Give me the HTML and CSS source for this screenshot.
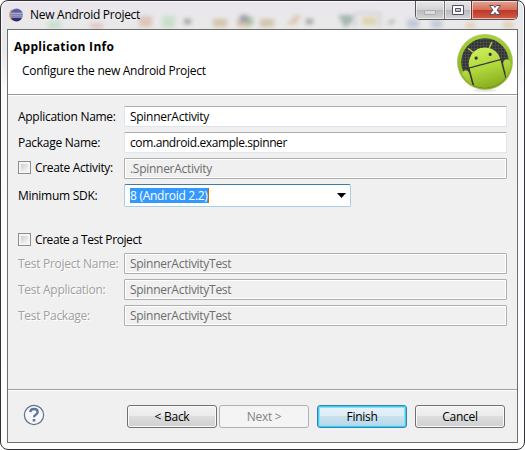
FILE: index.html
```html
<!DOCTYPE html>
<html lang="en">
<head>
<meta charset="utf-8">
<title>New Android Project</title>
<link rel="stylesheet" href="styles.css">
</head>
<body>
<div class="window">
  <header class="titlebar">
    <svg class="backdrop" width="523" height="28" aria-hidden="true">
      <defs><filter id="soft" x="-50%" y="-50%" width="200%" height="200%" color-interpolation-filters="sRGB"><feGaussianBlur stdDeviation="2.2"/></filter></defs>
      <g filter="url(#soft)">
        <path fill="#badabd" d="M47 20h13v8H47zM161 15h13v12h-13z"/>
        <path fill="#deb5b5" d="M89 22h13v6H89z"/>
        <path fill="#d4b49f" d="M138 15h13v11h-13z"/>
        <path fill="#c8b28b" d="M212 18h14v8h-14zM236 18h14v8h-14zM259 18h14v8h-14z"/>
        <path fill="#77738b" d="M239 14h8v7h-8z"/>
        <path fill="#85ad83" d="M247 16h5v8h-5z"/>
        <path fill="#d4b68a" d="m285 24 10-10h5l-5 9z"/>
        <path fill="#777" d="M183 18h7v5h-7zM305 18h7v5h-7zM385 23l8-5v4z"/>
        <path fill="#7f9d91" d="M337 14h15v6l-8 7z"/>
        <path fill="#d5ca92" d="M361 16h15v8h-15z"/>
        <path fill="#aeb9cd" d="M406 18h12v9h-12zM430 19h11v8h-11z"/>
        <path fill="#e2c69e" d="M465 21h9v7h-9zM502 20h10v8h-10z"/>
      </g>
      <g fill="none" stroke="#9b9b9b" filter="url(#soft)"><path d="M354 27V12h25v15"/></g>
    </svg>
    <svg class="app-icon" width="16" height="16" viewBox="0 0 16 16">
      <defs><linearGradient id="orb" x2="0" y2="1"><stop stop-color="#6a69b3"/><stop offset="1" stop-color="#292060"/></linearGradient></defs>
      <path d="M5 1.7C-.4 3.5-.5 12 5 14.3 2.4 11 2.4 5 5 1.7Z" fill="#e5a65d"/>
      <circle cx="8.5" cy="8" r="6.4" fill="url(#orb)"/>
      <path d="M2.1 6.2h12.8M1.8 8.1H15M2.1 10h12.8" stroke="#dbe2f2" stroke-width=".9"/>
    </svg>
    <h1 class="title">New Android Project</h1>
    <div class="controls">
      <span class="control minimize"><svg width="28" height="19"><rect x="8.5" y="9.5" width="11" height="4" rx=".5" fill="#ddd" stroke="#aaa"/></svg></span>
      <span class="control maximize"><svg width="26" height="19"><path fill="#fff" stroke="#515166" fill-rule="evenodd" d="M7.5 4.5h11v9h-11zm3 3v3h5v-3z"/></svg></span>
      <span class="control close"><svg width="47" height="19"><path d="M18.5 4.5h4l1.500 2 1.500-2h4L26 9l3.500 4.500h-4l-1.500-2-1.500 2h-4L22 9z" fill="#fff" stroke="#515166"/></svg></span>
    </div>
  </header>
  <main class="client">
    <section class="banner">
      <div class="heading">
        <h2>Application Info</h2>
        <p>Configure the new Android Project</p>
      </div>
      <svg class="logo" width="58" height="60" viewBox="0 0 58 60">
        <defs>
          <linearGradient id="ring" x2="0" y2="1"><stop stop-color="#a6d338"/><stop offset="1" stop-color="#82a81b"/></linearGradient>
          <linearGradient id="robot" gradientUnits="userSpaceOnUse" x1="29" y1="12" x2="29" y2="58"><stop stop-color="#cdf15c"/><stop offset=".5" stop-color="#afd63a"/><stop offset="1" stop-color="#83a81a"/></linearGradient>
          <pattern id="mesh" width="3" height="3" patternUnits="userSpaceOnUse"><path fill="#343434" d="M0 0h3v3H0z"/><path d="M0 0h3M0 0v3" stroke="#585858"/></pattern>
          <clipPath id="disc"><circle cx="29" cy="29" r="26"/></clipPath>
        </defs>
        <ellipse cx="29" cy="57.500" rx="12" ry="1.500" fill="#e8e8e8"/>
        <circle cx="29" cy="29" r="27.600" fill="url(#ring)" stroke="#a4b969" stroke-width=".6"/>
        <circle cx="29" cy="29" r="23.800" fill="url(#mesh)"/>
        <g clip-path="url(#disc)">
          <g transform="rotate(-15 29 31)" fill="url(#robot)">
            <path fill="#343434" d="M11 31h35v20l-3 8H14l-3-7z"/>
            <path d="M13 30a16 15.500 0 0 1 32 0zM13 31.300h32v30H13zM4 37q0-5 3.700-5t3.700 5v23H4zM46.500 37q0-5 3.700-5t3.700 5v18h-7.400z"/>
            <path d="m21 17-4-5M37 17l4-5" stroke="#b2da47" stroke-width="1.400" stroke-linecap="round"/>
            <g fill="#333"><circle cx="22" cy="23" r="1.600"/><circle cx="36.500" cy="23" r="1.600"/></g>
          </g>
        </g>
      </svg>
    </section>
    <form class="settings">
      <div class="row"><label>Application Name:</label><div class="field"><span>SpinnerActivity</span></div></div>
      <div class="row"><label>Package Name:</label><div class="field"><span class="domain">com.android.example.spinner</span></div></div>
      <div class="row"><label class="check"><i></i><span>Create Activity:</span></label><div class="field disabled"><span>.SpinnerActivity</span></div></div>
      <div class="row sdk"><label>Minimum SDK:</label><div class="combo"><mark>8 (Android 2.2)</mark><svg width="9" height="5"><path d="M0 0h9L4.500 5z"/></svg></div></div>
      <label class="check test"><i></i><span>Create a Test Project</span></label>
      <div class="row off"><label>Test Project Name:</label><div class="field disabled"><span>SpinnerActivityTest</span></div></div>
      <div class="row off"><label>Test Application:</label><div class="field disabled"><span>SpinnerActivityTest</span></div></div>
      <div class="row off"><label>Test Package:</label><div class="field disabled"><span>SpinnerActivityTest</span></div></div>
    </form>
    <footer class="actions">
      <span class="help"><svg width="22" height="22" viewBox="0 0 22 22"><circle cx="11" cy="11" r="9.600" fill="#f7f8fa" stroke="#60708d" stroke-width="1.200"/><path d="M7.300 8.100Q7.400 5 11 5q3.700 0 3.700 3 0 1.500-2 2.700Q11 11.600 11 13.300" fill="none" stroke="#60749c" stroke-width="2.300"/><path fill="#60749c" d="M9.700 15h2.600v2.500H9.700z"/></svg></span>
      <button class="back">&lt; Back</button>
      <button class="next" disabled>Next &gt;</button>
      <button class="finish">Finish</button>
      <button class="cancel">Cancel</button>
    </footer>
  </main>
</div>
</body>
</html>
```
FILE: styles.css
```css
* { box-sizing: border-box; }
body {
  margin: 0;
  background: #fff;
  font: 12px/16px "Open Sans", "Noto Sans", sans-serif;
  letter-spacing: -0.28px;
  color: #000;
}
h1, h2, p { margin: 0; font-size: 12px; font-weight: 400; }
svg { display: block; }
.window {
  width: 525px;
  height: 450px;
  padding: 0 6px 6px;
  border: 1px solid #303035;
  border-radius: 8px;
  background: linear-gradient(#e9e6ed, #e9e9e9 28px, #e9e9e9 50px, #fafafa 90px, #fdfdfd);
  box-shadow: inset 0 0 0 1px #fbfbfb;
}
.titlebar {
  position: relative;
  display: flex;
  align-items: flex-start;
  height: 28px;
}
.backdrop { position: absolute; left: -6px; top: 0; opacity: .65; }
.app-icon { position: relative; margin: 6px 0 0 1px; }
.title { position: relative; margin: 6px 0 0 6px; letter-spacing: -.27px; }
.controls {
  position: relative;
  display: flex;
  width: 103px;
  height: 19px;
  margin: 0 0 0 auto;
  border: 1px solid #57535b;
  border-top: 0;
  border-radius: 0 0 5px 5px;
  overflow: hidden;
}
.control {
  width: 28px;
  background: linear-gradient(#e7e6e8, #d3d3d5 48%, #b9b9bc 50%, #d5d5d7);
  box-shadow: inset 0 0 0 1px #ffffff90;
}
.maximize { width: 27px; border-left: 1px solid #77747c; }
.close { width: 47px; border-left: 1px solid #65343c; background: linear-gradient(#e6a392, #d6705b 48%, #bd3625 50%, #d55d43); }
.close svg { margin-left: -1px; }
.client {
  width: 511px;
  height: 414px;
  border: 1px solid #6e6e6e;
  background: #f0f0f0;
}
.banner {
  display: flex;
  justify-content: space-between;
  height: 64px;
  padding: 0 3px 0 6px;
  background: #fff;
}
.heading h2 { margin-top: 9px; font-weight: 700; letter-spacing: .3px; }
.heading p { margin: 8px 0 0 8px; }
.logo { margin-top: 3px; }
.settings {
  height: 295px;
  padding: 11px 9px 0 10px;
  border-top: 1px solid #9b9b9b;
  box-shadow: inset 0 1px #fff;
}
.row {
  display: grid;
  grid-template-columns: 106px 383px;
  align-items: center;
  height: 21px;
  margin: 0 0 5px;
}
.row > label:not(.check) { padding-top: 1px; }
.domain { letter-spacing: -.4px; }
.field {
  display: flex;
  align-items: center;
  height: 21px;
  padding: 1px 5px 0;
  border: 1px solid #dfe5ee;
  border-top-color: #abadb3;
  border-radius: 1px;
  background: #fff;
}
.disabled {
  border-color: #afafaf;
  background: #f0f0f0;
  box-shadow: inset 0 0 0 1px #fff;
  color: #6d6d6d;
}
.check { display: flex; align-items: center; gap: 4px; }
.check i {
  width: 13px;
  height: 13px;
  border: 1px solid #8e8f8f;
  background: linear-gradient(135deg, #cbcfd5, #f6f6f6) 2px 2px / 7px 7px no-repeat #f4f4f4;
  box-shadow: inset 0 0 0 1px #f4f4f4;
}
.row .check { margin-top: -2px; letter-spacing: -.33px; }
.sdk { height: 23px; grid-template-columns: 106px 227px; }
.combo {
  display: flex;
  align-items: center;
  justify-content: space-between;
  height: 23px;
  padding: 0 4px 0 5px;
  border: 1px solid #a6cfe7;
  border-top-color: #3d7bad;
  border-radius: 2px;
  background: #fff;
}
mark { height: 15px; line-height: 15px; border-right: 1px solid #cc6600; background: #39f; color: #fff; }
.test { height: 13px; margin: 26px 0 7px; letter-spacing: -.42px; }
.off label { color: #a0a0a0; text-shadow: 1px 1px #fff; }
.actions {
  display: flex;
  align-items: flex-start;
  height: 53px;
  padding: 15px 11px 0 15px;
  border-top: 1px solid #a0a0a0;
  box-shadow: inset 0 1px #fff;
}
.help { width: 104px; margin-top: -1px; }
button {
  width: 90px;
  height: 23px;
  padding: 1px 0 0;
  margin-right: 8px;
  border: 1px solid #707070;
  border-radius: 3px;
  background: linear-gradient(#f2f2f2, #ebebeb 49%, #ddd 50%, #cfcfcf);
  box-shadow: inset 0 0 0 1px #fafafa;
  color: #000;
  font: inherit;
  letter-spacing: inherit;
}
.back { margin-right: 2px; }
.next { border-color: #adb2b5; background: #f4f4f4; box-shadow: none; color: #838383; }
.finish {
  border-color: #3c7fb1;
  background: linear-gradient(#e8f2f8, #dcecf5 49%, #c9e1ed 50%, #b8d7e7);
  box-shadow: inset 0 0 0 1px #39cff5, inset 0 0 0 2px #8de0f5;
}
.cancel { margin-right: 0; }
```
